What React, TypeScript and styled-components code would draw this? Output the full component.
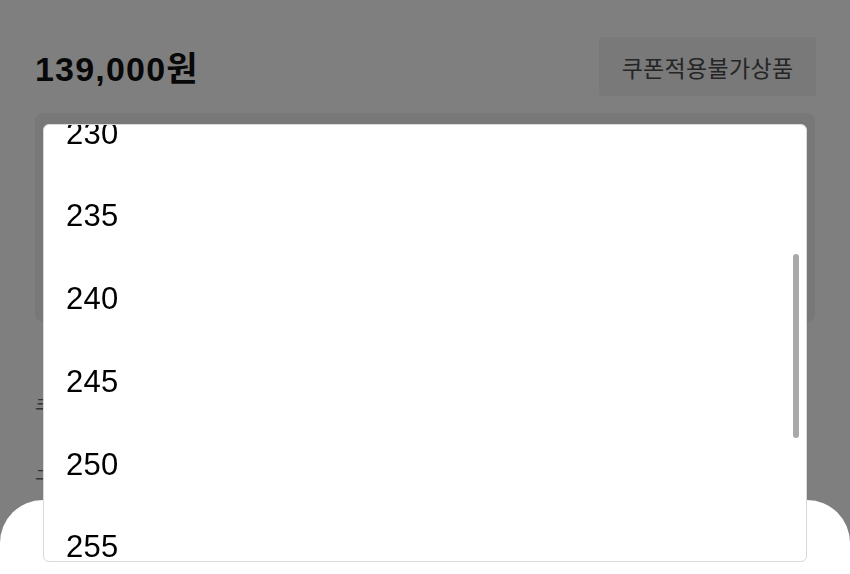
import React, { useEffect, useRef } from "react";
import styled, { createGlobalStyle } from "styled-components";

const SIZES = [215, 220, 225, 230, 235, 240, 245, 250, 255, 260, 265, 270];
const ITEM_HEIGHT = 82.75;
const SCROLL_TOP = 281;

const GlobalStyle = createGlobalStyle`
    html, body {
        margin: 0;
        padding: 0;
        background: #ffffff;
        font-family: "Liberation Sans", "Noto Sans CJK KR", sans-serif;
        overflow: hidden;
    }
`;

const App: React.FC = () => {
    const listRef = useRef<HTMLDivElement>(null);

    useEffect(() => {
        if (listRef.current) listRef.current.scrollTop = SCROLL_TOP;
    }, []);

    return (
        <>
            <GlobalStyle />
            <Page>
                <Header>
                    <Price>139,000원</Price>
                    <Badge>쿠폰적용불가상품</Badge>
                </Header>
                <SelectBox />
                <InfoRow>쿠폰 할인 정보</InfoRow>
                <InfoRow>구매 혜택 안내</InfoRow>
            </Page>
            <Dim />
            <Sheet />
            <Dropdown>
                <List ref={listRef}>
                    {SIZES.map(size => (
                        <Option key={size}>{size}</Option>
                    ))}
                </List>
                <Thumb />
            </Dropdown>
        </>
    );
};

const Page = styled.div`
    height: 574px;
    padding: 37px 35px 0;
    box-sizing: border-box;
    background: #ffffff;
`;

const Header = styled.div`
    display: flex;
    align-items: center;
    justify-content: space-between;
    height: 59px;
`;

const Price = styled.div`
    font-size: 34px;
    font-weight: bold;
    color: #111111;
    letter-spacing: 1.2px;
`;

const Badge = styled.div`
    display: flex;
    align-items: center;
    justify-content: center;
    width: 217px;
    height: 59px;
    margin-right: -1px;
    background: #f2f2f2;
    border-radius: 2px;
    font-family: "Noto Sans CJK KR", sans-serif;
    font-size: 23px;
    letter-spacing: 0.3px;
    color: #4a4a4a;
`;

const SelectBox = styled.div`
    height: 209px;
    margin-top: 17px;
    background: #f0f0f0;
    border-radius: 8px;
`;

const InfoRow = styled.div`
    margin-top: 70px;
    font-family: "Noto Sans CJK KR", sans-serif;
    font-size: 20px;
    color: #666666;
    & + & {
        margin-top: 42px;
    }
`;

const Dim = styled.div`
    position: fixed;
    inset: 0;
    background: rgba(0, 0, 0, 0.5);
`;

const Sheet = styled.div`
    position: fixed;
    left: 0;
    right: 0;
    top: 500px;
    bottom: 0;
    background: #ffffff;
    border-radius: 43px 43px 0 0;
`;

const Dropdown = styled.div`
    position: fixed;
    left: 43px;
    top: 124px;
    width: 764px;
    height: 438px;
    box-sizing: border-box;
    background: #ffffff;
    border: 1px solid #d9d9d9;
    border-radius: 6px;
    overflow: hidden;
`;

const List = styled.div`
    height: 100%;
    overflow-y: scroll;
    scrollbar-width: none;
    &::-webkit-scrollbar {
        display: none;
    }
`;

const Option = styled.div`
    display: flex;
    align-items: center;
    height: ${ITEM_HEIGHT}px;
    padding-left: 22px;
    font-size: 31px;
    letter-spacing: 0.3px;
    color: #000000;
`;

const Thumb = styled.div`
    position: absolute;
    right: 7px;
    top: 129px;
    width: 6px;
    height: 184px;
    border-radius: 3px;
    background: #a9a9a9;
`;

export default App;
